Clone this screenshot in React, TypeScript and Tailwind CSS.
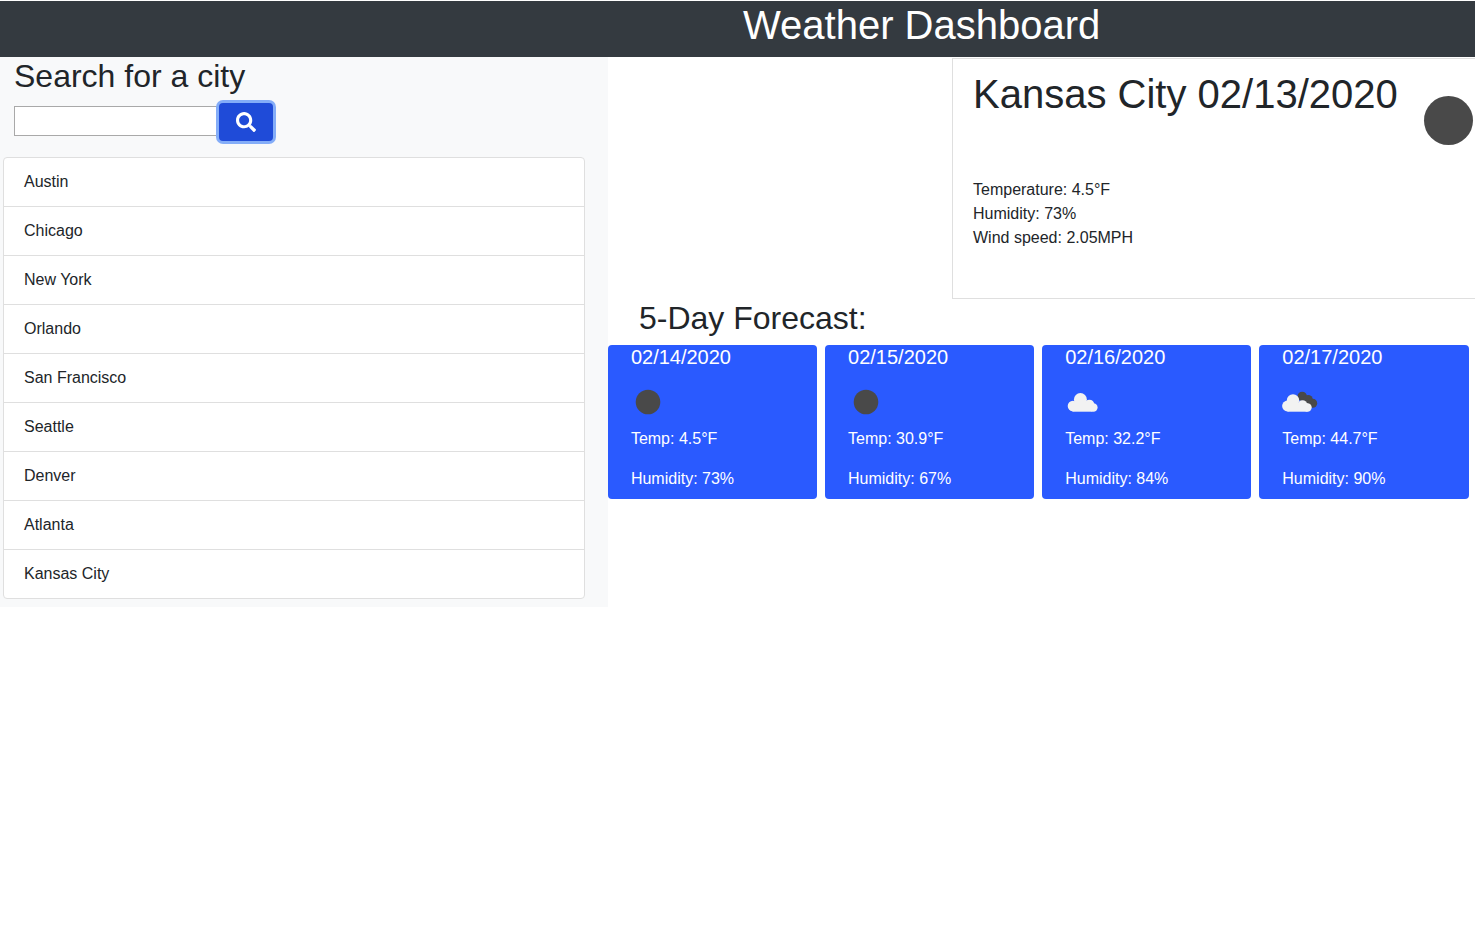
import React from "react";
import { FaSearch } from "react-icons/fa";

const cities = ["Austin", "Chicago", "New York", "Orlando", "San Francisco", "Seattle", "Denver", "Atlanta", "Kansas City"];

function Dot() {
  return (
    <svg width="50" height="50" viewBox="0 0 50 50" className="block">
      <circle cx="25" cy="25" r="12.3" fill="#494949" />
    </svg>
  );
}
function Cloud() {
  return (
    <svg width="50" height="50" viewBox="0 0 50 50" className="block">
      <g fill="#f2f2f2">
        <circle cx="22.4" cy="22.5" r="6.5" />
        <circle cx="14.9" cy="29" r="5.2" />
        <circle cx="31.4" cy="27.5" r="4.8" />
        <circle cx="35.4" cy="30.5" r="4.2" />
        <rect x="14.4" y="26" width="20" height="8.7" />
      </g>
    </svg>
  );
}
function DarkCloud() {
  return (
    <svg width="50" height="50" viewBox="0 0 50 50" className="block">
      <g fill="#494949">
        <circle cx="27.2" cy="19.4" r="4.7" />
        <circle cx="33.2" cy="22.5" r="4.6" />
        <circle cx="37.7" cy="26.2" r="4.5" />
      </g>
      <g fill="#f2f2f2">
        <circle cx="18" cy="23.5" r="6.2" />
        <circle cx="12.5" cy="29" r="5.4" />
        <circle cx="27.5" cy="28" r="4.8" />
        <circle cx="32.5" cy="30.5" r="4.2" />
        <rect x="12.5" y="26" width="20" height="8.7" />
      </g>
    </svg>
  );
}

const days = [
  { date: "02/14/2020", icon: <Dot />, temp: "4.5", hum: "73" },
  { date: "02/15/2020", icon: <Dot />, temp: "30.9", hum: "67" },
  { date: "02/16/2020", icon: <Cloud />, temp: "32.2", hum: "84" },
  { date: "02/17/2020", icon: <DarkCloud />, temp: "44.7", hum: "90" },
];

export default function App() {
  return (
    <div className="min-h-[931px] w-[1475px] overflow-hidden bg-white pt-px font-['Liberation_Sans',Arial,sans-serif] text-[16px] leading-6 text-[#212529]">
      <header className="h-[56px] bg-[#343a40] pl-[743px] text-[40px] leading-[48px] text-white">Weather Dashboard</header>
      <div className="flex items-start">
        <aside className="h-[550px] w-[608px] shrink-0 bg-[#f8f9fa]">
          <h3 className="pl-[14px] text-[32px] leading-[38.4px]">Search for a city</h3>
          <div className="flex items-center pl-[14px] pt-[7.6px]">
            <input className="mb-[2px] h-[30px] w-[204px] border border-[#a9a9a9] bg-white" aria-label="Search for a city" />
            <button className="ml-px flex h-[38px] w-[54px] items-center justify-center rounded-[4px] bg-[#1f4bd8] text-[20px] text-white ring-[3px] ring-[#84adf8]">
              <FaSearch />
            </button>
          </div>
          <ul className="ml-[3px] mt-[16px] w-[582px] overflow-hidden rounded-[4px] border border-[#dfdfdf] bg-white">
            {cities.map((c, i) => (
              <li key={c} className={i < cities.length - 1 ? "h-[49px] border-b border-[#dfdfdf] px-5 py-3" : "h-[48px] px-5 py-3"}>{c}</li>
            ))}
          </ul>
        </aside>
        <main className="min-w-0 flex-1">
          <section className="ml-[344px] mt-px flex h-[241px] w-[560px] border border-[#dfdfdf] pl-5 pt-[11px]">
            <div>
              <h2 className="text-[40px] leading-[48px]">Kansas City 02/13/2020</h2>
              <div className="mt-[60px]">
                <p>Temperature: 4.5°F</p>
                <p>Humidity: 73%</p>
                <p>Wind speed: 2.05MPH</p>
              </div>
            </div>
            <div className="ml-[26px] mt-[26px] h-[49px] w-[49px] rounded-full bg-[#494949]" />
          </section>
          <h3 className="pl-[31px] text-[32px] leading-[38.4px]">5-Day Forecast:</h3>
          <div className="mt-[8px] flex gap-2">
            {days.map((d) => (
              <article key={d.date} className="h-[154px] w-[209.15px] shrink-0 rounded-[4px] bg-[#2a5aff] pl-[15.4px] text-white">
                <div className="pl-[7.5px] text-[20px] leading-6">{d.date}</div>
                <div className="mt-[8px] h-[50px]">{d.icon}</div>
                <p className="pl-[7.5px]">Temp: {d.temp}°F</p>
                <p className="mt-4 pl-[7.5px]">Humidity: {d.hum}%</p>
              </article>
            ))}
          </div>
        </main>
      </div>
    </div>
  );
}
